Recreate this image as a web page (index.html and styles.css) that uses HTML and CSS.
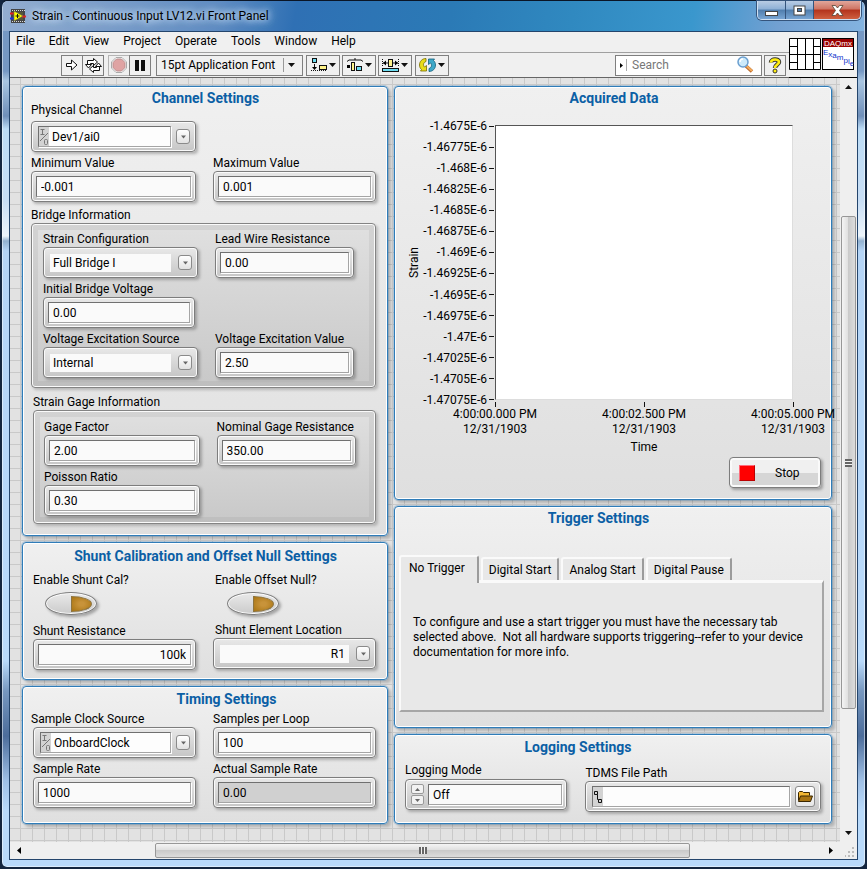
FILE: index.html
```html
<!DOCTYPE html>
<html lang="en">
<head>
<meta charset="utf-8">
<title>Strain - Continuous Input LV12.vi Front Panel</title>
<link rel="stylesheet" href="styles.css">
</head>
<body>
<svg class="defs" aria-hidden="true">
  <symbol id="down" viewBox="0 0 7 4"><path d="M0 0h7L3.5 4z" fill="currentColor"/></symbol>
  <symbol id="up" viewBox="0 0 7 4"><path d="M0 4h7L3.5 0z" fill="currentColor"/></symbol>
  <symbol id="io" viewBox="0 0 10 19"><path d="M1.500 2.500h4M3.500 2.500v5M1.500 7.500h4M1 14L9 6" stroke="#777" fill="none"/><rect x="5.500" y="12.500" width="3" height="5" rx="1" stroke="#777" fill="none"/></symbol>
</svg>
<div class="window">
  <header class="titlebar">
    <svg class="app-icon" width="16" height="15" viewBox="0 0 16 15"><rect x="1" y="0" width="14" height="14" fill="#444"/><path d="M2 1.500h13M2 12.500h13" stroke="#d8d8d8" stroke-dasharray="1 1"/><rect x="3" y="3" width="10" height="8" fill="#55553a"/><path d="M0 4.500h4M12 7.500h4" stroke="#e02020" stroke-width="2"/><path d="M0 9.500h4" stroke="#2030e0" stroke-width="2"/><path d="M4 2l9 5-9 5z" fill="#ff0" stroke="#665" stroke-width=".6"/><path d="M5.500 7h4M7.500 5v4" stroke="#111"/></svg>
    <h1>Strain - Continuous Input LV12.vi Front Panel</h1>
    <div class="win-buttons">
      <button class="min" aria-label="Minimize"><svg width="13" height="6" viewBox="0 0 13 6"><rect x=".5" y=".5" width="12" height="4" fill="#fff" stroke="#444"/></svg></button>
      <button class="max" aria-label="Maximize"><svg width="13" height="11" viewBox="0 0 13 11"><rect x="1" y="1" width="11" height="9" fill="#fff" stroke="#444"/><rect x="4.500" y="3.500" width="4" height="3" fill="#4f7dad" stroke="#444"/></svg></button>
      <button class="close" aria-label="Close"><svg width="13" height="11" viewBox="0 0 13 11"><path d="M1 .5h3.500l2 2.500 2-2.500H12L8.500 5.500 12 10.500H8.500l-2-2.500-2 2.500H1l3.500-5z" fill="#fff" stroke="#543" stroke-width=".8"/></svg></button>
    </div>
  </header>
  <div class="client">
    <div class="top">
      <div class="bars">
        <nav class="menu"><a href="#">File</a><a href="#">Edit</a><a href="#">View</a><a href="#">Project</a><a href="#">Operate</a><a href="#">Tools</a><a href="#">Window</a><a href="#">Help</a></nav>
        <div class="toolbar">
          <div class="joined">
            <button aria-label="Run"><svg width="14" height="14" viewBox="0 0 14 14"><path d="M1.500 5.500h5v-3.500l5.500 5-5.500 5V8.500h-5z" fill="#fff" stroke="#111"/></svg></button>
            <button aria-label="Run Continuously"><svg width="17" height="15" viewBox="0 0 17 15"><path d="M2.500 6v-3.500h6v-2l4 3.500-4 3.500v-2h-3V6M14.500 9v3.500h-6v2l-4-3.500 4-3.500v2h3V9" fill="#fff" stroke="#111"/><path d="M.5 6.500h6L3.500 10zM16.500 8.500h-6L13.500 5z" fill="#fff" stroke="#111"/></svg></button>
          </div>
          <div class="joined">
            <button class="faint" aria-label="Abort"><svg width="16" height="16" viewBox="0 0 16 16"><path d="M5 .5h6L15.500 5v6L11 15.500H5L.5 11V5z" fill="#fff" stroke="#aaa"/><path d="M5.500 2h5L14 5.500v5L10.500 14h-5L2 10.500v-5z" fill="#dfa3a3" stroke="#b98c8c"/></svg></button>
            <button aria-label="Pause"><svg width="10" height="11" viewBox="0 0 10 11"><path d="M0 0h4v11H0zM6 0h4v11H6z" fill="#111"/></svg></button>
          </div>
          <div class="font-pick"><select aria-label="Font"><option>15pt Application Font</option></select><svg width="7" height="4"><use href="#down"/></svg></div>
          <button class="drop" aria-label="Align Objects"><svg width="16" height="14" viewBox="0 0 16 14"><rect x="1.500" y=".5" width="4" height="4" fill="#6cdcf0" stroke="#111"/><path d="M3.500 6v5" stroke="#111"/><path d="M1 9h5L3.500 12z"/><path d="M0 12.500h16" stroke="#111" stroke-dasharray="1 1"/><rect x="8.500" y="7.500" width="7" height="4" fill="#fff38a" stroke="#111"/></svg><svg width="7" height="4"><use href="#down"/></svg></button>
          <button class="drop" aria-label="Distribute Objects"><svg width="16" height="14" viewBox="0 0 16 14"><path d="M0 3.500l2-1.500h12l2 1.500M8 2V0" stroke="#111" fill="none"/><path d="M0 7h3v3H0z"/><rect x="4.500" y="4.500" width="3" height="8" fill="#fff38a" stroke="#111"/><rect x="9.500" y="8.500" width="5" height="4" fill="#6cdcf0" stroke="#111"/></svg><svg width="7" height="4"><use href="#down"/></svg></button>
          <button class="drop" aria-label="Resize Objects"><svg width="17" height="14" viewBox="0 0 17 14"><path d="M.5 1v8M16.500 1v8" stroke="#111" stroke-dasharray="1 1"/><path d="M1 5h5M11 5h5" stroke="#111"/><path d="M4 2.500v5L1 5zM13 2.500v5L16 5z"/><rect x="6.500" y="1.500" width="4" height="7" fill="#fff38a" stroke="#111"/><rect x=".5" y="10.500" width="16" height="3" fill="#6cdcf0" stroke="#111"/></svg><svg width="7" height="4"><use href="#down"/></svg></button>
          <button class="drop reorder" aria-label="Reorder"><svg width="17" height="14" viewBox="0 0 17 14"><path d="M7 .5C3 .5.5 3.500.5 7c0 2 .8 3.500 2 4.500L1.500 13h6V7.500L5.500 9C4 7.500 4 4.500 7 3.500z" fill="#e8dc18" stroke="#776b00" stroke-width=".8"/><path d="M10 13.500c4 0 6.500-3 6.500-6.500 0-2-.8-3.500-2-4.500L15.500 1h-6v5.500L11.500 5c1.500 1.500 1.500 4.500-1.500 5.500z" fill="#3fa9c9" stroke="#135d78" stroke-width=".8"/></svg><svg width="7" height="4"><use href="#down"/></svg></button>
          <div class="search">
            <svg width="8" height="14" viewBox="0 0 8 14"><path d="M1 5l3 2.500L1 10z"/><path d="M7.500 1v12" stroke="#aaa"/></svg>
            <input type="text" placeholder="Search" aria-label="Search">
            <svg width="18" height="18" viewBox="0 0 18 18"><path d="M10 10l6 5.500" stroke="#b9672a" stroke-width="3.500"/><path d="M10.500 10l5.500 5" stroke="#f4ac5c" stroke-width="2"/><circle cx="7" cy="6" r="5" fill="#cdeafa" stroke="#6a9fd0" stroke-width="1.500"/><path d="M4 6a3 3 0 0 1 3-3" stroke="#fff" stroke-width="1.500" fill="none"/></svg>
          </div>
          <button class="help" aria-label="Context Help"><svg width="14" height="17" viewBox="0 0 14 17"><path d="M3 5.500C3 1.500 11 1.500 11 5c0 2.500-4 2.500-4 6" fill="none" stroke="#333" stroke-width="4.500"/><path d="M3 5.500C3 1.500 11 1.500 11 5c0 2.500-4 2.500-4 6" fill="none" stroke="#ffee10" stroke-width="2.600"/><circle cx="7" cy="14" r="2" fill="#ffee10" stroke="#333"/></svg></button>
        </div>
      </div>
      <div class="vi-icons">
        <svg width="32" height="32" viewBox="0 0 32 32"><path d="M.5.500h31v31H.5zM8.500 0v32M16.500 0v32M24.500 0v32M0 16.500h32M0 8.500h8M0 24.500h8M24 8.500h8M24 24.500h8" fill="#fff" stroke="#000"/></svg>
        <svg width="32" height="32" viewBox="0 0 32 32"><rect x=".5" y=".5" width="31" height="31" fill="#fff" stroke="#000"/><path d="M1 1h30v8H1z" fill="#900"/><text class="daq" x="2" y="8">DAQmx</text><text class="exa" x="1" y="17">E<tspan dy="2">x</tspan><tspan dy="1">a</tspan><tspan dy="2">m</tspan><tspan dy="3">p</tspan><tspan dy="1">l</tspan><tspan dy="2">e</tspan></text></svg>
      </div>
    </div>
    <div class="body">
      <main class="canvas">
        <div class="col left">
          <section class="panel channel">
            <h2>Channel Settings</h2>
            <div class="pair first">
              <div class="field"><label for="pc">Physical Channel</label><div class="box combo"><span class="slot"><svg width="10" height="19"><use href="#io"/></svg><input id="pc" type="text" value="Dev1/ai0"></span><button class="arrow" aria-label="Browse channels"><svg width="7" height="4"><use href="#down"/></svg></button></div></div>
            </div>
            <div class="pair">
              <div class="field"><label for="minv">Minimum Value</label><div class="box"><input id="minv" type="text" value="-0.001"></div></div>
              <div class="field"><label for="maxv">Maximum Value</label><div class="box"><input id="maxv" type="text" value="0.001"></div></div>
            </div>
            <h3>Bridge Information</h3>
            <div class="group">
              <div class="pair">
                <div class="field"><label for="sc">Strain Configuration</label><div class="box ring"><select id="sc"><option>Full Bridge I</option></select><span class="arrow"><svg width="7" height="4"><use href="#down"/></svg></span></div></div>
                <div class="field"><label for="lwr">Lead Wire Resistance</label><div class="box"><input id="lwr" type="text" value="0.00"></div></div>
                <div class="field short"><label for="ibv">Initial Bridge Voltage</label><div class="box"><input id="ibv" type="text" value="0.00"></div></div>
                <div></div>
                <div class="field"><label for="ves">Voltage Excitation Source</label><div class="box ring"><select id="ves"><option>Internal</option></select><span class="arrow"><svg width="7" height="4"><use href="#down"/></svg></span></div></div>
                <div class="field"><label for="vev">Voltage Excitation Value</label><div class="box"><input id="vev" type="text" value="2.50"></div></div>
              </div>
            </div>
            <h3 class="gage-head">Strain Gage Information</h3>
            <div class="group gage">
              <div class="pair">
                <div class="field"><label for="gf">Gage Factor</label><div class="box"><input id="gf" type="text" value="2.00"></div></div>
                <div class="field"><label for="ngr">Nominal Gage Resistance</label><div class="box"><input id="ngr" type="text" value="350.00"></div></div>
                <div class="field"><label for="pr">Poisson Ratio</label><div class="box"><input id="pr" type="text" value="0.30"></div></div>
              </div>
            </div>
          </section>
          <section class="panel shunt">
            <h2>Shunt Calibration and Offset Null Settings</h2>
            <div class="pair">
              <div class="toggle"><label for="esc">Enable Shunt Cal?</label><input id="esc" type="checkbox"></div>
              <div class="toggle"><label for="eon">Enable Offset Null?</label><input id="eon" type="checkbox"></div>
            </div>
            <div class="pair shunt-fields">
              <div class="field inset"><label for="sr">Shunt Resistance</label><div class="box"><input id="sr" class="num" type="text" value="100k"></div></div>
              <div class="field"><label for="sel">Shunt Element Location</label><div class="box ring"><select id="sel" class="num"><option>R1</option></select><span class="arrow"><svg width="7" height="4"><use href="#down"/></svg></span></div></div>
            </div>
          </section>
          <section class="panel timing">
            <h2>Timing Settings</h2>
            <div class="pair">
              <div class="field inset"><label for="scs">Sample Clock Source</label><div class="box combo"><span class="slot"><svg width="10" height="19"><use href="#io"/></svg><input id="scs" type="text" value="OnboardClock"></span><button class="arrow" aria-label="Browse clocks"><svg width="7" height="4"><use href="#down"/></svg></button></div></div>
              <div class="field"><label for="spl">Samples per Loop</label><div class="box"><input id="spl" type="text" value="100"></div></div>
              <div class="field inset"><label class="shifted" for="rate">Sample Rate</label><div class="box"><input id="rate" type="text" value="1000"></div></div>
              <div class="field"><label for="asr">Actual Sample Rate</label><div class="box"><input id="asr" class="readout" type="text" value="0.00" readonly></div></div>
            </div>
          </section>
        </div>
        <div class="col right">
          <section class="panel acquired">
            <h2>Acquired Data</h2>
            <div class="chart">
              <div class="y-title"><span>Strain</span></div>
              <ol class="y-axis"><li>-1.4675E-6</li><li>-1.46775E-6</li><li>-1.468E-6</li><li>-1.46825E-6</li><li>-1.4685E-6</li><li>-1.46875E-6</li><li>-1.469E-6</li><li>-1.46925E-6</li><li>-1.4695E-6</li><li>-1.46975E-6</li><li>-1.47E-6</li><li>-1.47025E-6</li><li>-1.4705E-6</li><li>-1.47075E-6</li></ol>
              <div class="plot"></div>
              <ol class="x-axis"><li>4:00:00.000 PM<br>12/31/1903</li><li>4:00:02.500 PM<br>12/31/1903</li><li>4:00:05.000 PM<br>12/31/1903</li></ol>
              <div class="x-title">Time</div>
            </div>
            <button class="stop"><i></i><span>Stop</span></button>
          </section>
          <section class="panel trigger">
            <h2>Trigger Settings</h2>
            <div class="tabs" role="tablist">
              <button role="tab" aria-selected="true">No Trigger</button><button role="tab" aria-selected="false">Digital Start</button><button role="tab" aria-selected="false">Analog Start</button><button role="tab" aria-selected="false">Digital Pause</button>
            </div>
            <div class="page" role="tabpanel">
              <p>To configure and use a start trigger you must have the necessary tab<br>selected above.&nbsp; Not all hardware supports triggering--refer to your device<br>documentation for more info.</p>
            </div>
          </section>
          <section class="panel logging">
            <h2>Logging Settings</h2>
            <div class="log-row">
              <div class="field mode"><label for="lm">Logging Mode</label><div class="box enum"><span class="spin"><button aria-label="Next"><svg width="5" height="3"><use href="#up"/></svg></button><button aria-label="Previous"><svg width="5" height="3"><use href="#down"/></svg></button></span><select id="lm"><option>Off</option></select></div></div>
              <div class="field path"><label for="tp">TDMS File Path</label><div class="box combo"><span class="slot"><svg width="10" height="19" viewBox="0 0 10 19"><path d="M1.500 4.500h3v3h-3zM5.500 12.500h3v3h-3zM4.500 7.500v5h1" fill="none" stroke="#111"/></svg><input id="tp" type="text" value=""></span><button class="folder" aria-label="Browse"><svg width="15" height="11" viewBox="0 0 15 11"><path d="M.5 9.500v-8l1-1h3l1 1h6v3" fill="#f2b632" stroke="#3a2600"/><path d="M.5 10.500l2-5.500h12l-2 5.500z" fill="#a87412" stroke="#3a2600"/></svg></button></div></div>
            </div>
          </section>
        </div>
      </main>
      <div class="bar vertical"><svg width="7" height="4"><use href="#up"/></svg><div class="track"><div class="thumb"><i></i></div></div><svg width="7" height="4"><use href="#down"/></svg></div>
      <div class="bar horizontal"><svg width="4" height="7" viewBox="0 0 4 7"><path d="M4 0v7L0 3.500z"/></svg><div class="track"><div class="thumb"><i></i></div></div><svg width="4" height="7" viewBox="0 0 4 7"><path d="M0 0v7l4-3.500z"/></svg></div>
      <div class="grip"><svg width="10" height="10" viewBox="0 0 10 10"><path d="M7 0h2v2H7zM7 4h2v2H7zM3 4h2v2H3zM7 8h2v2H7zM3 8h2v2H3zM0 8h1v2H0z" fill="#bbb"/></svg></div>
    </div>
  </div>
</div>
</body>
</html>
```

FILE: styles.css
```css
* { box-sizing: border-box; }
html, body { margin: 0; height: 100%; }
body { background: #14263f; font: 12px/14px Roboto, "Open Sans", sans-serif; color: #000; overflow: hidden; }
h1, h2, h3, p, ol { margin: 0; padding: 0; font-size: 12px; font-weight: 400; list-style: none; }
button, input, select { font: inherit; color: inherit; margin: 0; padding: 0; border: 0; border-radius: 0; background: none; appearance: none; min-width: 0; outline: 0; }
button { display: flex; align-items: center; justify-content: center; }
svg { display: block; flex: none; color: #111; }
.defs { position: absolute; width: 0; height: 0; }

.window {
  height: 100vh; display: flex; flex-direction: column; padding: 0 7px 7px;
  border: 2px solid #14263f; border-top: 1px solid #0a1526; border-radius: 7px;
  background: linear-gradient(#7598c4 0, #7598c4 70px, #a9c6e2 80px, #6f8fb9 115px, #bcdcf6 128px, #c8def5 200px, #ecf4fb 235px, #92b1d0 240px, #b4d4f6 250px, #b9dafb 660px, #7798c0 690px, #4c6d9b 735px, #9fc0e6 780px, #b9dafb 810px);
  box-shadow: inset 0 0 0 1px rgba(255, 255, 255, .5);
}
.titlebar {
  height: 30px; flex: none; display: flex; align-items: center; gap: 6px; margin: 0 -6px; padding-left: 7px; border-radius: 5px 5px 0 0;
  background: linear-gradient(100deg, #93add0 0, #5f8cc2 25%, #2f70b4 34%, #2b7ab6 52%, #3089c0 66%, #3a97cd 80%, #72a0d2 90%, #83b3e0 100%);
}
.titlebar h1 { flex: 1; line-height: 20px; white-space: nowrap; text-shadow: 0 0 6px #cfe2f5, 0 0 8px #cfe2f5, 0 0 12px #b4d0ee; }
.win-buttons { align-self: flex-start; display: flex; height: 19px; border: 1px solid #cfe0f2; border-top: 0; border-radius: 0 0 5px 5px; overflow: hidden; box-shadow: 0 0 0 1px #35547c; margin-right: 3px; }
.win-buttons button { width: 28px; border-right: 1px solid #35547c; background: linear-gradient(#b8cce4, #8eb0d6 45%, #4f7dad 50%, #78a5d3); }
.win-buttons .min { padding-top: 7px; }
.win-buttons .close { width: 46px; border: 0; background: linear-gradient(#e2a79b, #cf7463 45%, #b3331c 50%, #cf6040); }

.client { flex: 1; min-height: 0; display: flex; flex-direction: column; border: 1px solid #24456c; background: #f0f0f0; }
.top { display: flex; flex: none; }
.bars { flex: 1; min-width: 0; border-bottom: 1px solid #666; }
.menu { display: flex; gap: 14px; height: 21px; align-items: center; padding: 0 6px 2px; border-bottom: 1px solid #a0a0a0; }
.menu a { color: inherit; text-decoration: none; }
.toolbar { display: flex; align-items: center; gap: 2px; height: 24px; padding: 0 3px 0 51px; }
.toolbar button { height: 21px; border: 1px solid #7f7f7f; width: 22px; }
.joined { display: flex; margin-right: 2px; }
.joined button + button { margin-left: -1px; }
.toolbar .faint { border-color: #b5b5b5; }
.font-pick { display: flex; align-items: center; height: 21px; width: 147px; border: 1px solid #7f7f7f; padding: 0 7px 0 4px; margin: 0 1px; }
.font-pick select { flex: 1; height: 14px; border-right: 1px solid #999; margin-right: 4px; overflow: hidden; }
.toolbar .drop { width: 34px; gap: 2px; }
.toolbar .reorder { margin: 0 auto 0 1px; }
.search { display: flex; align-items: center; height: 21px; width: 147px; border: 1px solid #7f7f7f; background: #fff; padding: 0 7px 0 3px; }
.search input { flex: 1; height: 19px; padding-left: 5px; }
.search input::placeholder { color: #777; opacity: 1; }
.vi-icons { display: flex; gap: 1px; padding: 6px 3px 0 0; border-bottom: 1px solid #000; }
.daq { font: 8px "Liberation Sans", sans-serif; fill: #fff; }
.exa { font: 8px "Liberation Sans", sans-serif; fill: #13c; }

.body { flex: 1; min-height: 0; display: grid; grid-template: minmax(0, 1fr) 17px / minmax(0, 1fr) 17px; }
.canvas {
  display: grid; grid-template-columns: 366fr 438fr; gap: 6px; align-content: start; align-items: stretch; padding: 8px 8px 0 12px; overflow: hidden;
  background: linear-gradient(#c9c9c9 1px, transparent 1px) 0 6px / 12px 12px, linear-gradient(90deg, #c9c9c9 1px, transparent 1px) 10px 0 / 12px 12px, #e2e2e2;
}
.col { display: flex; flex-direction: column; gap: 6px; min-width: 0; }
.panel {
  display: flex; flex-direction: column; border: 1px solid #2f7cb8; border-radius: 4px; padding: 4px 11px 11px 8px;
  background: linear-gradient(#f0f0f0, #dfdfdf); box-shadow: inset 0 0 0 1px #fff, 0 0 0 1px rgba(63, 134, 189, .3), 3px 3px 3px rgba(0, 0, 0, .2);
}
.panel h2 { text-align: center; font-size: 14px; font-weight: 700; color: #0b5fa5; white-space: nowrap; padding-left: 4px; }

.pair { display: grid; grid-template-columns: 165fr 163fr; gap: 4px 17px; }
.field { display: flex; flex-direction: column; min-width: 0; }
.field label, .toggle label, h3 { height: 15px; white-space: nowrap; }
.box {
  display: flex; align-items: center; height: 31px; padding: 4px; border: 1px solid #7d7d7d; border-radius: 4px;
  background: linear-gradient(#e8e8e8, #c6c6c6); box-shadow: inset 0 0 0 1px #fafafa, 2px 2px 3px rgba(0, 0, 0, .25);
}
.box > input, .slot, .enum select { flex: 1; height: 21px; border: 1px solid #a5a5a5; border-top-color: #707070; border-left-color: #707070; background: #fafafa; box-shadow: 1px 1px 0 #fff; }
.box > input, .enum select { padding: 0 4px; }
.box > input.num { text-align: right; }
.box > input.readout { background: #d0d0d0; }
.combo { padding: 4px 5px 4px 6px; gap: 5px; }
.slot { display: flex; min-width: 0; background: #d3d3d3; }
.slot input { flex: 1; background: #fdfdfd; padding-left: 3px; }
.ring { padding: 4px 5px 4px 6px; gap: 7px; }
.ring select { flex: 1; height: 18px; background: #fafafa; padding-left: 3px; }
.ring select.num { text-align: right; text-align-last: right; padding-right: 4px; }
.arrow { flex: none; display: flex; align-items: center; justify-content: center; width: 14px; height: 15px; border: 1px solid #8a8a8a; border-radius: 3px; background: linear-gradient(#fff, #e2e2e2); }
.arrow svg, .spin svg { color: #666; }
.arrow svg { width: 5px; }

.first { margin-top: -2px; }
.first .box { margin-top: 3px; }
.first + .pair { margin-top: 4px; }
h3 { margin-top: 6px; }
.gage-head { margin: 7px 0 0 2px; }
.group {
  border: 1px solid #848484; border-radius: 4px; padding: 8px 21px 9px 11px; background: linear-gradient(#e0e0e0, #c8c8c8);
  box-shadow: inset 0 0 0 1px #fafafa, inset 0 0 0 6px rgba(120, 120, 120, .12), 2px 2px 3px rgba(0, 0, 0, .2);
}
.group .pair { grid-template-columns: 155fr 139fr; }
.short .box { margin-right: 3px; }
.gage { margin-left: 2px; padding: 9px 19px 7px 10px; }

.shunt { padding: 6px 11px 9px 8px; }
.shunt .pair { margin-top: 10px; }
.toggle label { display: block; padding-left: 2px; }
.toggle input {
  display: flex; align-items: center; justify-content: flex-end; width: 52px; height: 23px; margin: 4px 0 0 14px; padding-right: 4px;
  border: 1px solid #7d7d7d; border-radius: 50%; background: linear-gradient(#e9e9e9, #cbcbcb); box-shadow: inset 0 0 0 1px #fafafa, 2px 2px 3px rgba(0, 0, 0, .3);
}
.toggle input::after { content: ""; width: 19px; height: 14px; border: 1px solid #8d7440; border-radius: 0 100% 100% 0 / 0 50% 50% 0; background: radial-gradient(#c8933a 20%, #a87412); }
.shunt .shunt-fields { margin-top: 8px; align-items: start; }
.shunt-fields .inset { margin-top: 1px; }
.shunt-fields label, .field .shifted { padding-left: 2px; }
.inset .box { margin-left: 2px; }
.timing { padding: 5px 11px 15px 8px; }
.timing h2 { padding-left: 46px; }
.timing .pair { margin-top: 6px; }

.right .panel { padding-right: 10px; }
.acquired { flex: 1; }
.chart { flex: 1; display: grid; grid-template: minmax(0, 1fr) auto auto / 22px 70px minmax(0, 1fr); margin: 20px 28px 0 0; }
.y-title { display: flex; align-items: center; justify-content: center; }
.y-title span { writing-mode: vertical-rl; transform: rotate(180deg); }
.y-axis { display: flex; flex-direction: column; justify-content: space-between; margin: -6px 0 -7px; text-align: right; }
.y-axis li { display: flex; align-items: center; justify-content: flex-end; gap: 2px; white-space: nowrap; }
.y-axis li::after { content: ""; flex: none; width: 5px; height: 1px; background: #111; margin-right: 1px; }
.plot { background: #fff; border: 1px solid #ddd; border-top-color: #555; border-left-color: #555; }
.x-axis { grid-column: 3; display: flex; justify-content: space-between; margin: 2px -40px 0; line-height: 15px; text-align: center; white-space: nowrap; }
.x-axis li { display: flex; flex-direction: column; align-items: center; width: 80px; }
.x-axis li::before { content: ""; display: block; width: 1px; height: 5px; background: #111; }
.x-title { grid-column: 3; text-align: center; margin-top: 3px; }
.stop { align-self: flex-end; width: 92px; height: 31px; margin-top: 3px; justify-content: flex-start; gap: 20px; padding-left: 9px; border: 1px solid #7d7d7d; border-radius: 4px; background: linear-gradient(#f0f0f0 50%, #d6d6d6 50%); box-shadow: inset 0 0 0 2px #fafafa, 2px 2px 3px rgba(0, 0, 0, .3); }
.stop i { width: 16px; height: 16px; background: #f00; border: 1px solid #b00; border-top-color: #ff6b7b; border-left-color: #ff6b7b; }

.right .trigger { padding: 4px 7px 15px 4px; }
.trigger h2 { padding: 0 26px 0 0; }
.tabs { display: flex; align-items: flex-end; gap: 2px; margin-top: 30px; }
.tabs button { height: 23px; padding: 0 6px; border: 2px solid #fafafa; border-bottom: 0; border-right-color: #9b9b9b; border-radius: 3px 3px 0 0; background: #e8e8e8; white-space: nowrap; }
.tabs [aria-selected="true"] { position: relative; height: 28px; padding: 0 12px 5px 8px; margin-bottom: -3px; background: #e8e8e8; }
.page { height: 132px; padding: 32px 12px; border: 2px solid #fafafa; border-top-width: 3px; border-right-color: #a6a6a6; border-bottom-color: #a6a6a6; background: #e8e8e8; line-height: 15px; white-space: nowrap; }

.right .logging { padding: 5px 10px 11px; }
.logging h2 { padding: 0 70px 0 0; }
.log-row { display: grid; grid-template-columns: 162fr 235fr; gap: 18px; margin-top: 9px; align-items: start; }
.path { margin-top: 3px; }
.mode .box { margin-top: 1px; }
.enum { gap: 4px; padding-left: 5px; }
.spin { display: flex; flex-direction: column; flex: none; gap: 1px; }
.spin button { width: 13px; height: 10px; border: 1px solid #9a9a9a; border-radius: 2px; background: #f2f2f2; }
.folder { width: 20px; height: 21px; flex: none; border: 1px solid #8a8a8a; border-radius: 3px; background: linear-gradient(#fff, #e6e6e6); }

.bar { display: flex; align-items: center; background: #efefef; padding: 7px 0; }
.bar .track { flex: 1; align-self: stretch; display: flex; }
.vertical { flex-direction: column; }
.vertical .track { flex-direction: column; margin: 6px 0; }
.horizontal { padding: 0 7px; }
.horizontal .track { margin: 0 6px; }
.track::before { content: ""; flex: 121; }
.track::after { content: ""; flex: 116; }
.horizontal .track::before { flex: 128; }
.horizontal .track::after { flex: 133; }
.thumb { flex: 493; display: flex; align-items: center; justify-content: center; margin: 0 1px; border: 1px solid #979797; border-radius: 2px; background: linear-gradient(90deg, #f4f4f4, #e0e0e0 45%, #cacaca 50%, #dcdcdc); }
.horizontal .thumb { flex: 535; margin: 1px 0; background: linear-gradient(#f4f4f4, #e0e0e0 45%, #cacaca 50%, #dcdcdc); }
.thumb i { width: 7px; height: 8px; background: repeating-linear-gradient(#666 0 2px, #f4f4f4 2px 3px); }
.horizontal .thumb i { width: 8px; height: 7px; background: repeating-linear-gradient(90deg, #666 0 2px, #f4f4f4 2px 3px); }
.grip { display: flex; align-items: flex-end; justify-content: flex-end; padding: 2px; background: #efefef; }
```
